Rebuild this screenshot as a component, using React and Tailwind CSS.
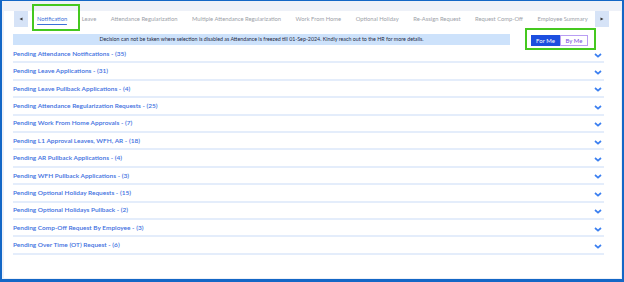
const tabs = [
  'Notification',
  'Leave',
  'Attendance Regularization',
  'Multiple Attendance Regularization',
  'Work From Home',
  'Optional Holiday',
  'Re-Assign Request',
  'Request Comp-Off',
  'Employee Summary',
]

const rows = [
  'Pending Attendance Notifications - (35)',
  'Pending Leave Applications - (31)',
  'Pending Leave Pullback Applications - (4)',
  'Pending Attendance Regularization Requests - (25)',
  'Pending Work From Home Approvals - (7)',
  'Pending L1 Approval Leaves, WFH, AR - (18)',
  'Pending AR Pullback Applications - (4)',
  'Pending WFH Pullback Applications - (3)',
  'Pending Optional Holiday Requests - (15)',
  'Pending Optional Holidays Pullback - (2)',
  'Pending Comp-Off Request By Employee - (3)',
  'Pending Over Time (OT) Request - (6)',
]

const Chevron = () => (
  <svg width="8" height="5" viewBox="0 0 8 5" className="mt-[3px]">
    <path d="M1 1l3 2.6L7 1" fill="none" stroke="#3b7ff0" strokeWidth="1.7" />
  </svg>
)

const ArrowButton = ({ right }) => (
  <div className="w-[14px] h-[16px] bg-[#d6e3f7] flex items-center justify-center shrink-0">
    <svg width="4" height="4" viewBox="0 0 4 4">
      <path d={right ? 'M0.5 0.5L3.5 2L0.5 3.5Z' : 'M3.5 0.5L0.5 2L3.5 3.5Z'} fill="#333" />
    </svg>
  </div>
)

export default function App() {
  return (
    <div
      className="w-[624px] h-[282px] bg-[#eef1f8] border-t border-l-2 border-r-2 border-b-[3px] border-[#1467c6] pt-[3px] pl-[2px] pr-[1px] pb-[8px] overflow-hidden"
      style={{ fontFamily: 'Lato, "Open Sans", sans-serif' }}
    >
      <div className="bg-white h-full">
        {/* tabs */}
        <div className="flex items-center h-[16px] mt-[7px] pl-[10px] pr-[12px] relative">
          <ArrowButton />
          <div className="flex items-center flex-1 ml-[9px] gap-[14.5px] overflow-hidden whitespace-nowrap">
            {tabs.map((t, i) => (
              <div key={t} className="relative h-[16px] flex items-center">
                <span
                  className={`text-[5.8px] ${i === 0 ? 'text-[#3b6fd8]' : 'text-[#9da2a9]'}`}
                >
                  {t}
                </span>
                {i === 0 && (
                  <div className="absolute left-0 right-0 bottom-[2px] h-[1.5px] bg-[#3b6fd8] rounded" />
                )}
              </div>
            ))}
          </div>
          <ArrowButton right />
          <div className="absolute left-[28px] top-[-7px] w-[48px] h-[27px] border-2 border-[#45c81f]" />
        </div>

        {/* banner + toggle */}
        <div className="flex items-start mt-[7px] pl-[9px] relative">
          <div className="w-[497px] h-[11px] bg-[#cde2fb] flex items-center justify-center">
            <span className="text-[5.3px] text-[#1f2a44] whitespace-nowrap">
              Decision can not be taken where selection is disabled as Attendance is freezed till
              01-Sep-2024. Kindly reach out to the HR for more details.
            </span>
          </div>
          <div className="flex ml-[21px] mt-[1px] h-[11px]">
            <div className="w-[29px] bg-[#1c4fe0] text-white text-[6px] flex items-center justify-center">
              For Me
            </div>
            <div className="w-[28px] bg-white border border-[#b99ef3] text-[#7a4fe0] text-[6px] flex items-center justify-center">
              By Me
            </div>
          </div>
          <div className="absolute left-[521px] top-[-6px] w-[71px] h-[22px] border-2 border-[#45c81f]" />
        </div>

        {/* list */}
        <div className="pl-[9px] pr-[17px]">
          {rows.map((r) => (
            <div
              key={r}
              className="flex items-center justify-between h-[17.4px] border-b-2 border-[#e4edfb] pr-[2px]"
            >
              <span className="text-[6.5px] font-semibold text-[#3b6ee0] whitespace-nowrap">
                {r}
              </span>
              <Chevron />
            </div>
          ))}
        </div>
      </div>
    </div>
  )
}
